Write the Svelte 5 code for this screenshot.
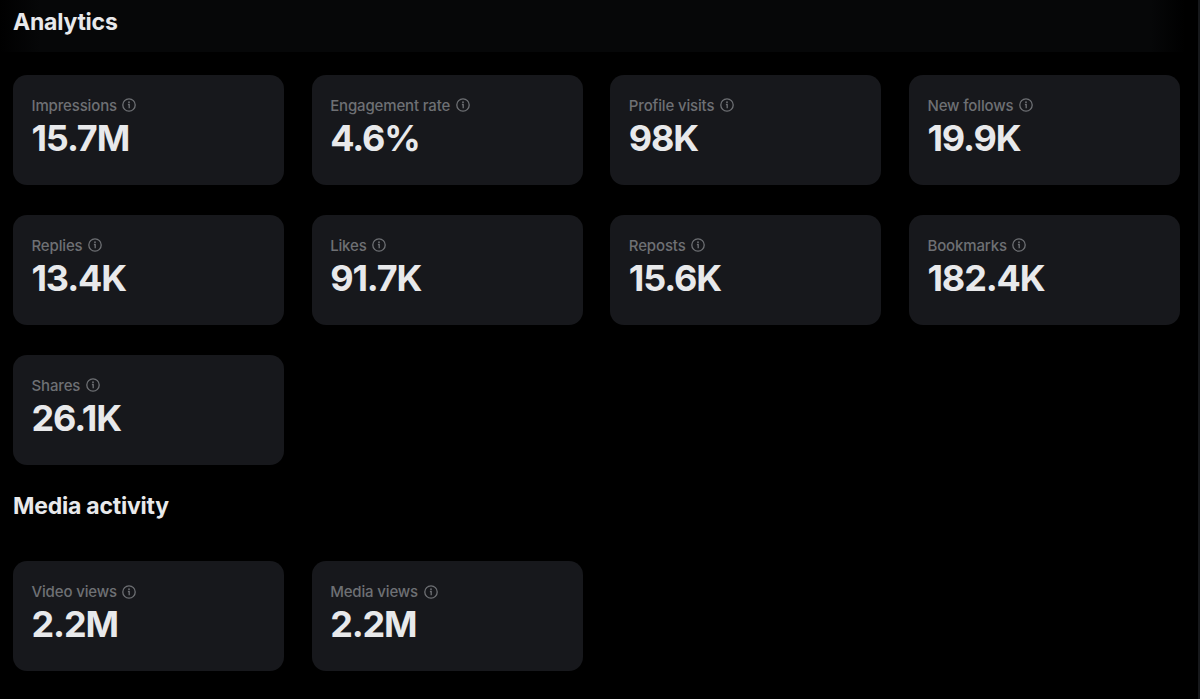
<script lang="ts">
	type Metric = { label: string; value: string };

	const analytics: Metric[] = [
		{ label: 'Impressions', value: '15.7M' },
		{ label: 'Engagement rate', value: '4.6%' },
		{ label: 'Profile visits', value: '98K' },
		{ label: 'New follows', value: '19.9K' },
		{ label: 'Replies', value: '13.4K' },
		{ label: 'Likes', value: '91.7K' },
		{ label: 'Reposts', value: '15.6K' },
		{ label: 'Bookmarks', value: '182.4K' },
		{ label: 'Shares', value: '26.1K' }
	];

	const media: Metric[] = [
		{ label: 'Video views', value: '2.2M' },
		{ label: 'Media views', value: '2.2M' }
	];
</script>

{#snippet cards(metrics: Metric[])}
	<div class="grid">
		{#each metrics as metric}
			<div class="card">
				<div class="label">
					<span>{metric.label}</span>
					<svg class="info" viewBox="0 0 14 14" aria-hidden="true">
						<circle cx="7" cy="7" r="6.2" />
						<path d="M5.9 6.5h1.3v3.8" />
						<circle class="dot" cx="7" cy="4.2" r="0.9" />
					</svg>
				</div>
				<div class="value">{metric.value}</div>
			</div>
		{/each}
	</div>
{/snippet}

<div class="page">
	<header>
		<h1>Analytics</h1>
	</header>
	<main>
		{@render cards(analytics)}
		<h2>Media activity</h2>
		{@render cards(media)}
	</main>
</div>

<style>
	:global(body) {
		background: #000;
	}

	.page {
		box-sizing: border-box;
		height: 699px;
		overflow: hidden;
		border-right: 2px solid #16181b;
		background: #000;
		color: #e8e9eb;
		font-family: Inter, 'Liberation Sans', sans-serif;
	}

	header {
		display: flex;
		align-items: center;
		box-sizing: border-box;
		height: 52px;
		padding: 0 13px 9px;
		background: linear-gradient(to right, #000, #060708 40px, #060708 1150px, #000 1185px);
	}

	h1,
	h2 {
		margin: 0;
		font-size: 23px;
		line-height: 28px;
		font-weight: 700;
		letter-spacing: -0.23px;
	}

	h2 {
		padding: 27.5px 0 41px;
	}

	main {
		padding: 22.5px 18px 0 13px;
	}

	.grid {
		display: grid;
		grid-template-columns: repeat(4, 1fr);
		column-gap: 27.67px;
		row-gap: 30px;
	}

	.card {
		box-sizing: border-box;
		height: 110px;
		padding: 20px 18.5px;
		border-radius: 14px;
		background: #17181c;
	}

	.label {
		display: flex;
		align-items: center;
		gap: 5.5px;
		height: 21px;
		color: #6e7074;
		font-size: 15px;
		font-weight: 500;
		letter-spacing: -0.15px;
		white-space: nowrap;
	}

	.info {
		width: 14px;
		height: 14px;
		fill: none;
		stroke: currentColor;
		stroke-width: 1.3;
	}

	.info .dot {
		fill: currentColor;
		stroke: none;
	}

	.value {
		font-size: 36px;
		line-height: 44px;
		font-weight: 750;
		letter-spacing: -1.15px;
	}
</style>
